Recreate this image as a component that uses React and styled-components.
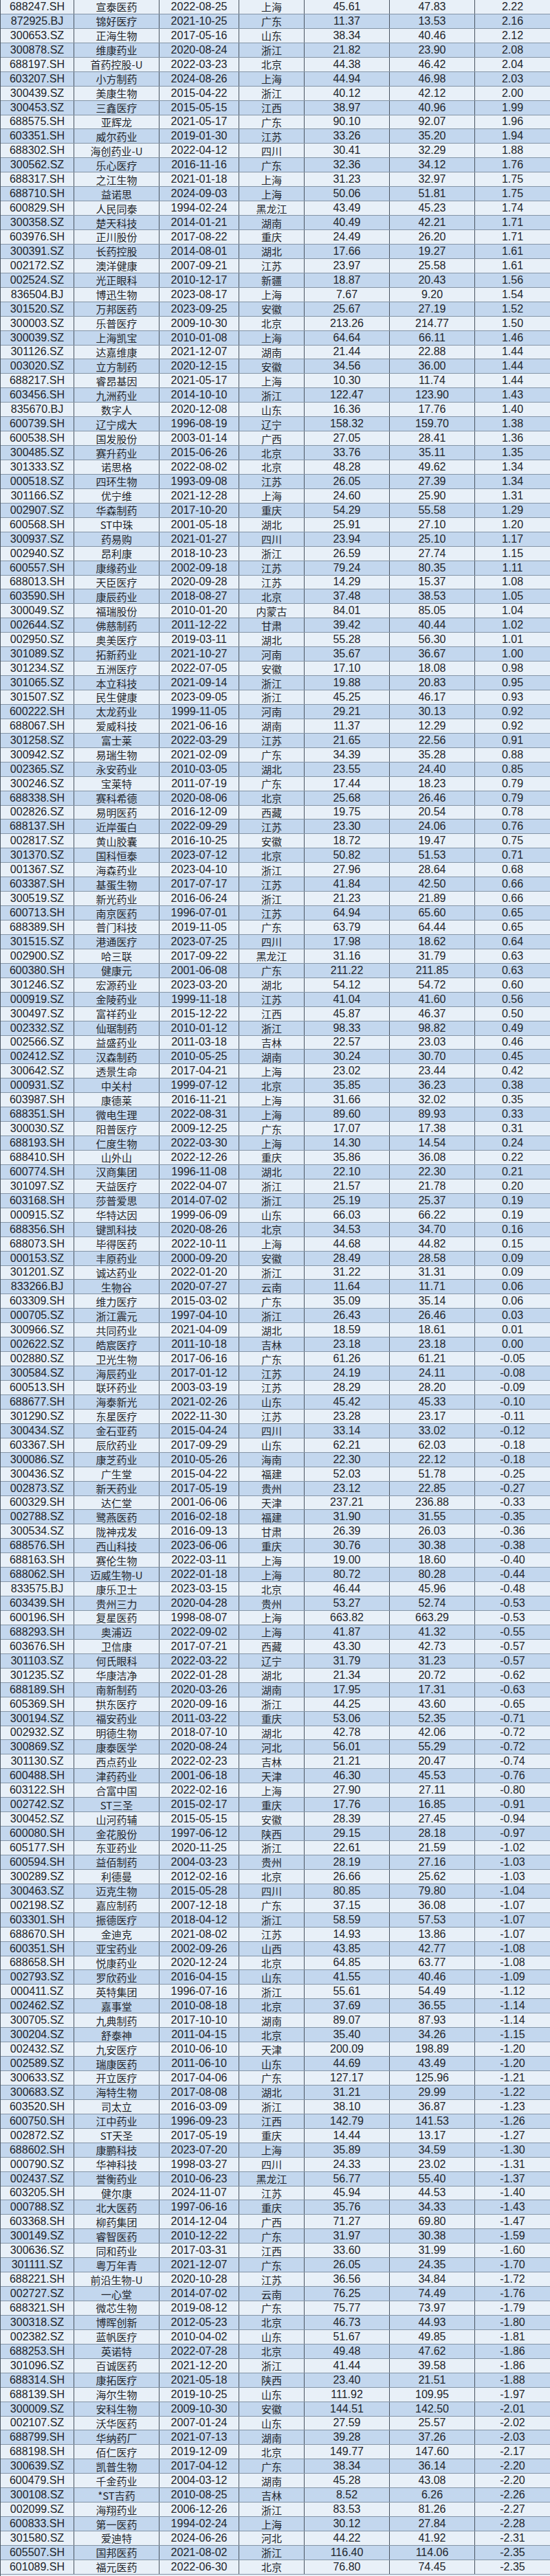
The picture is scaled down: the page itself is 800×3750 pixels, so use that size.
import styled, { createGlobalStyle } from "styled-components";

// 代码 名称 上市日期 省份 前值 现值 变动
const RAW = `
688247.SH 宣泰医药 2022-08-25 上海 45.61 47.83 2.22
872925.BJ 锦好医疗 2021-10-25 广东 11.37 13.53 2.16
300653.SZ 正海生物 2017-05-16 山东 38.34 40.46 2.12
300878.SZ 维康药业 2020-08-24 浙江 21.82 23.90 2.08
688197.SH 首药控股-U 2022-03-23 北京 44.38 46.42 2.04
603207.SH 小方制药 2024-08-26 上海 44.94 46.98 2.03
300439.SZ 美康生物 2015-04-22 浙江 40.12 42.12 2.00
300453.SZ 三鑫医疗 2015-05-15 江西 38.97 40.96 1.99
688575.SH 亚辉龙 2021-05-17 广东 90.10 92.07 1.96
603351.SH 威尔药业 2019-01-30 江苏 33.26 35.20 1.94
688302.SH 海创药业-U 2022-04-12 四川 30.41 32.29 1.88
300562.SZ 乐心医疗 2016-11-16 广东 32.36 34.12 1.76
688317.SH 之江生物 2021-01-18 上海 31.23 32.97 1.75
688710.SH 益诺思 2024-09-03 上海 50.06 51.81 1.75
600829.SH 人民同泰 1994-02-24 黑龙江 43.49 45.23 1.74
300358.SZ 楚天科技 2014-01-21 湖南 40.49 42.21 1.71
603976.SH 正川股份 2017-08-22 重庆 24.49 26.20 1.71
300391.SZ 长药控股 2014-08-01 湖北 17.66 19.27 1.61
002172.SZ 澳洋健康 2007-09-21 江苏 23.97 25.58 1.61
002524.SZ 光正眼科 2010-12-17 新疆 18.87 20.43 1.56
836504.BJ 博迅生物 2023-08-17 上海 7.67 9.20 1.54
301520.SZ 万邦医药 2023-09-25 安徽 25.67 27.19 1.52
300003.SZ 乐普医疗 2009-10-30 北京 213.26 214.77 1.50
300039.SZ 上海凯宝 2010-01-08 上海 64.64 66.11 1.46
301126.SZ 达嘉维康 2021-12-07 湖南 21.44 22.88 1.44
003020.SZ 立方制药 2020-12-15 安徽 34.56 36.00 1.44
688217.SH 睿昂基因 2021-05-17 上海 10.30 11.74 1.44
603456.SH 九洲药业 2014-10-10 浙江 122.47 123.90 1.43
835670.BJ 数字人 2020-12-08 山东 16.36 17.76 1.40
600739.SH 辽宁成大 1996-08-19 辽宁 158.32 159.70 1.38
600538.SH 国发股份 2003-01-14 广西 27.05 28.41 1.36
300485.SZ 赛升药业 2015-06-26 北京 33.76 35.11 1.35
301333.SZ 诺思格 2022-08-02 北京 48.28 49.62 1.34
000518.SZ 四环生物 1993-09-08 江苏 26.05 27.39 1.34
301166.SZ 优宁维 2021-12-28 上海 24.60 25.90 1.31
002907.SZ 华森制药 2017-10-20 重庆 54.29 55.58 1.29
600568.SH ST中珠 2001-05-18 湖北 25.91 27.10 1.20
300937.SZ 药易购 2021-01-27 四川 23.94 25.10 1.17
002940.SZ 昂利康 2018-10-23 浙江 26.59 27.74 1.15
600557.SH 康缘药业 2002-09-18 江苏 79.24 80.35 1.11
688013.SH 天臣医疗 2020-09-28 江苏 14.29 15.37 1.08
603590.SH 康辰药业 2018-08-27 北京 37.48 38.53 1.05
300049.SZ 福瑞股份 2010-01-20 内蒙古 84.01 85.05 1.04
002644.SZ 佛慈制药 2011-12-22 甘肃 39.42 40.44 1.02
002950.SZ 奥美医疗 2019-03-11 湖北 55.28 56.30 1.01
301089.SZ 拓新药业 2021-10-27 河南 35.67 36.67 1.00
301234.SZ 五洲医疗 2022-07-05 安徽 17.10 18.08 0.98
301065.SZ 本立科技 2021-09-14 浙江 19.88 20.83 0.95
301507.SZ 民生健康 2023-09-05 浙江 45.25 46.17 0.93
600222.SH 太龙药业 1999-11-05 河南 29.21 30.13 0.92
688067.SH 爱威科技 2021-06-16 湖南 11.37 12.29 0.92
301258.SZ 富士莱 2022-03-29 江苏 21.65 22.56 0.91
300942.SZ 易瑞生物 2021-02-09 广东 34.39 35.28 0.88
002365.SZ 永安药业 2010-03-05 湖北 23.55 24.40 0.85
300246.SZ 宝莱特 2011-07-19 广东 17.44 18.23 0.79
688338.SH 赛科希德 2020-08-06 北京 25.68 26.46 0.79
002826.SZ 易明医药 2016-12-09 西藏 19.75 20.54 0.78
688137.SH 近岸蛋白 2022-09-29 江苏 23.30 24.06 0.76
002817.SZ 黄山胶囊 2016-10-25 安徽 18.72 19.47 0.75
301370.SZ 国科恒泰 2023-07-12 北京 50.82 51.53 0.71
001367.SZ 海森药业 2023-04-10 浙江 27.96 28.64 0.68
603387.SH 基蛋生物 2017-07-17 江苏 41.84 42.50 0.66
300519.SZ 新光药业 2016-06-24 浙江 21.23 21.89 0.66
600713.SH 南京医药 1996-07-01 江苏 64.94 65.60 0.65
688389.SH 普门科技 2019-11-05 广东 63.79 64.44 0.65
301515.SZ 港通医疗 2023-07-25 四川 17.98 18.62 0.64
002900.SZ 哈三联 2017-09-22 黑龙江 31.16 31.79 0.63
600380.SH 健康元 2001-06-08 广东 211.22 211.85 0.63
301246.SZ 宏源药业 2023-03-20 湖北 54.12 54.72 0.60
000919.SZ 金陵药业 1999-11-18 江苏 41.04 41.60 0.56
300497.SZ 富祥药业 2015-12-22 江西 45.87 46.37 0.50
002332.SZ 仙琚制药 2010-01-12 浙江 98.33 98.82 0.49
002566.SZ 益盛药业 2011-03-18 吉林 22.57 23.03 0.46
002412.SZ 汉森制药 2010-05-25 湖南 30.24 30.70 0.45
300642.SZ 透景生命 2017-04-21 上海 23.02 23.44 0.42
000931.SZ 中关村 1999-07-12 北京 35.85 36.23 0.38
603987.SH 康德莱 2016-11-21 上海 31.66 32.02 0.35
688351.SH 微电生理 2022-08-31 上海 89.60 89.93 0.33
300030.SZ 阳普医疗 2009-12-25 广东 17.07 17.38 0.31
688193.SH 仁度生物 2022-03-30 上海 14.30 14.54 0.24
688410.SH 山外山 2022-12-26 重庆 35.86 36.08 0.22
600774.SH 汉商集团 1996-11-08 湖北 22.10 22.30 0.21
301097.SZ 天益医疗 2022-04-07 浙江 21.57 21.78 0.20
603168.SH 莎普爱思 2014-07-02 浙江 25.19 25.37 0.19
000915.SZ 华特达因 1999-06-09 山东 66.03 66.22 0.19
688356.SH 键凯科技 2020-08-26 北京 34.53 34.70 0.16
688073.SH 毕得医药 2022-10-11 上海 44.68 44.82 0.15
000153.SZ 丰原药业 2000-09-20 安徽 28.49 28.58 0.09
301201.SZ 诚达药业 2022-01-20 浙江 31.22 31.31 0.09
833266.BJ 生物谷 2020-07-27 云南 11.64 11.71 0.06
603309.SH 维力医疗 2015-03-02 广东 35.09 35.14 0.06
000705.SZ 浙江震元 1997-04-10 浙江 26.43 26.46 0.03
300966.SZ 共同药业 2021-04-09 湖北 18.59 18.61 0.01
002622.SZ 皓宸医疗 2011-10-18 吉林 23.18 23.18 0.00
002880.SZ 卫光生物 2017-06-16 广东 61.26 61.21 -0.05
300584.SZ 海辰药业 2017-01-12 江苏 24.19 24.11 -0.08
600513.SH 联环药业 2003-03-19 江苏 28.29 28.20 -0.09
688677.SH 海泰新光 2021-02-26 山东 45.42 45.33 -0.10
301290.SZ 东星医疗 2022-11-30 江苏 23.28 23.17 -0.11
300434.SZ 金石亚药 2015-04-24 四川 33.14 33.02 -0.12
603367.SH 辰欣药业 2017-09-29 山东 62.21 62.03 -0.18
300086.SZ 康芝药业 2010-05-26 海南 22.30 22.12 -0.18
300436.SZ 广生堂 2015-04-22 福建 52.03 51.78 -0.25
002873.SZ 新天药业 2017-05-19 贵州 23.12 22.85 -0.27
600329.SH 达仁堂 2001-06-06 天津 237.21 236.88 -0.33
002788.SZ 鹭燕医药 2016-02-18 福建 31.90 31.55 -0.35
300534.SZ 陇神戎发 2016-09-13 甘肃 26.39 26.03 -0.36
688576.SH 西山科技 2023-06-06 重庆 30.76 30.38 -0.38
688163.SH 赛伦生物 2022-03-11 上海 19.00 18.60 -0.40
688062.SH 迈威生物-U 2022-01-18 上海 80.72 80.28 -0.44
833575.BJ 康乐卫士 2023-03-15 北京 46.44 45.96 -0.48
603439.SH 贵州三力 2020-04-28 贵州 53.27 52.74 -0.53
600196.SH 复星医药 1998-08-07 上海 663.82 663.29 -0.53
688293.SH 奥浦迈 2022-09-02 上海 41.87 41.32 -0.55
603676.SH 卫信康 2017-07-21 西藏 43.30 42.73 -0.57
301103.SZ 何氏眼科 2022-03-22 辽宁 31.79 31.23 -0.57
301235.SZ 华康洁净 2022-01-28 湖北 21.34 20.72 -0.62
688189.SH 南新制药 2020-03-26 湖南 17.95 17.31 -0.63
605369.SH 拱东医疗 2020-09-16 浙江 44.25 43.60 -0.65
300194.SZ 福安药业 2011-03-22 重庆 53.06 52.35 -0.71
002932.SZ 明德生物 2018-07-10 湖北 42.78 42.06 -0.72
300869.SZ 康泰医学 2020-08-24 河北 56.01 55.29 -0.72
301130.SZ 西点药业 2022-02-23 吉林 21.21 20.47 -0.74
600488.SH 津药药业 2001-06-18 天津 46.30 45.53 -0.76
603122.SH 合富中国 2022-02-16 上海 27.90 27.11 -0.80
002742.SZ ST三圣 2015-02-17 重庆 17.76 16.85 -0.91
300452.SZ 山河药辅 2015-05-15 安徽 28.39 27.45 -0.94
600080.SH 金花股份 1997-06-12 陕西 29.15 28.18 -0.97
605177.SH 东亚药业 2020-11-25 浙江 22.61 21.59 -1.02
600594.SH 益佰制药 2004-03-23 贵州 28.19 27.16 -1.03
300289.SZ 利德曼 2012-02-16 北京 26.66 25.62 -1.03
300463.SZ 迈克生物 2015-05-28 四川 80.85 79.80 -1.04
002198.SZ 嘉应制药 2007-12-18 广东 37.15 36.08 -1.07
603301.SH 振德医疗 2018-04-12 浙江 58.59 57.53 -1.07
688670.SH 金迪克 2021-08-02 江苏 14.93 13.86 -1.07
600351.SH 亚宝药业 2002-09-26 山西 43.85 42.77 -1.08
688658.SH 悦康药业 2020-12-24 北京 64.85 63.77 -1.08
002793.SZ 罗欣药业 2016-04-15 山东 41.55 40.46 -1.09
000411.SZ 英特集团 1996-07-16 浙江 55.61 54.49 -1.12
002462.SZ 嘉事堂 2010-08-18 北京 37.69 36.55 -1.14
300705.SZ 九典制药 2017-10-10 湖南 89.07 87.93 -1.14
300204.SZ 舒泰神 2011-04-15 北京 35.40 34.26 -1.15
002432.SZ 九安医疗 2010-06-10 天津 200.09 198.89 -1.20
002589.SZ 瑞康医药 2011-06-10 山东 44.69 43.49 -1.20
300633.SZ 开立医疗 2017-04-06 广东 127.17 125.96 -1.21
300683.SZ 海特生物 2017-08-08 湖北 31.21 29.99 -1.22
603520.SH 司太立 2016-03-09 浙江 38.10 36.87 -1.23
600750.SH 江中药业 1996-09-23 江西 142.79 141.53 -1.26
002872.SZ ST天圣 2017-05-19 重庆 14.44 13.17 -1.27
688602.SH 康鹏科技 2023-07-20 上海 35.89 34.59 -1.30
000790.SZ 华神科技 1998-03-27 四川 24.33 23.02 -1.31
002437.SZ 誉衡药业 2010-06-23 黑龙江 56.77 55.40 -1.37
603205.SH 健尔康 2024-11-07 江苏 45.94 44.53 -1.40
000788.SZ 北大医药 1997-06-16 重庆 35.76 34.33 -1.43
603368.SH 柳药集团 2014-12-04 广西 71.27 69.80 -1.47
300149.SZ 睿智医药 2010-12-22 广东 31.97 30.38 -1.59
300636.SZ 同和药业 2017-03-31 江西 33.60 31.99 -1.60
301111.SZ 粤万年青 2021-12-07 广东 26.05 24.35 -1.70
688221.SH 前沿生物-U 2020-10-28 江苏 36.56 34.84 -1.72
002727.SZ 一心堂 2014-07-02 云南 76.25 74.49 -1.76
688321.SH 微芯生物 2019-08-12 广东 75.77 73.97 -1.79
300318.SZ 博晖创新 2012-05-23 北京 46.73 44.93 -1.80
002382.SZ 蓝帆医疗 2010-04-02 山东 51.67 49.85 -1.81
688253.SH 英诺特 2022-07-28 北京 49.48 47.62 -1.86
301096.SZ 百诚医药 2021-12-20 浙江 41.44 39.58 -1.86
688314.SH 康拓医疗 2021-05-18 陕西 23.40 21.51 -1.88
688139.SH 海尔生物 2019-10-25 山东 111.92 109.95 -1.97
300009.SZ 安科生物 2009-10-30 安徽 144.51 142.50 -2.01
002107.SZ 沃华医药 2007-01-24 山东 27.59 25.57 -2.02
688799.SH 华纳药厂 2021-07-13 湖南 39.28 37.26 -2.03
688198.SH 佰仁医疗 2019-12-09 北京 149.77 147.60 -2.17
300639.SZ 凯普生物 2017-04-12 广东 38.34 36.14 -2.20
600479.SH 千金药业 2004-03-12 湖南 45.28 43.08 -2.20
300108.SZ *ST吉药 2010-08-25 吉林 8.52 6.26 -2.26
002099.SZ 海翔药业 2006-12-26 浙江 83.53 81.26 -2.27
600833.SH 第一医药 1994-02-24 上海 30.12 27.84 -2.28
301580.SZ 爱迪特 2024-06-26 河北 44.22 41.92 -2.31
605507.SH 国邦医药 2021-08-02 浙江 116.40 114.06 -2.35
601089.SH 福元医药 2022-06-30 北京 76.80 74.45 -2.35
`;

const rows = RAW.trim().split("\n").map((line) => line.trim().split(/\s+/));

const GlobalStyle = createGlobalStyle`
  html, body {
    margin: 0;
    padding: 0;
    background: #e8f0f8;
  }
  body {
    font-family: "Liberation Sans", "Noto Sans CJK SC", sans-serif;
    color: #22262c;
  }
`;

const Table = styled.div`
  width: 800px;
  height: 3750px;
  display: flex;
  flex-direction: column;
  overflow: hidden;
  box-sizing: border-box;
  border-left: 1px solid #4a5561;
`;

const Row = styled.div`
  flex: 0 0 20.95px;
  display: grid;
  grid-template-columns: 107px 124px 116px 95px 124px 124px 109px;
  box-sizing: border-box;
  border-bottom: 1px solid #8495a7;
  background: ${({ $blue }) => ($blue ? "#c3d7ee" : "#e8f0f8")};
`;

const Cell = styled.div`
  display: flex;
  align-items: center;
  justify-content: center;
  border-right: 1px solid #4a5561;
  font-size: 16px;
  line-height: 1;
  white-space: nowrap;
  overflow: hidden;

  &:last-child {
    border-right: none;
  }
`;

const NameCell = styled(Cell)`
  font-family: "Noto Sans CJK SC", "Liberation Sans", sans-serif;
  font-size: 15px;
`;

export default function App() {
  return (
    <>
      <GlobalStyle />
      <Table>
        {rows.map((r, i) => (
          <Row key={r[0]} $blue={i % 2 === 1}>
            <Cell>{r[0]}</Cell>
            <NameCell>{r[1]}</NameCell>
            <Cell>{r[2]}</Cell>
            <NameCell>{r[3]}</NameCell>
            <Cell>{r[4]}</Cell>
            <Cell>{r[5]}</Cell>
            <Cell>{r[6]}</Cell>
          </Row>
        ))}
      </Table>
    </>
  );
}
